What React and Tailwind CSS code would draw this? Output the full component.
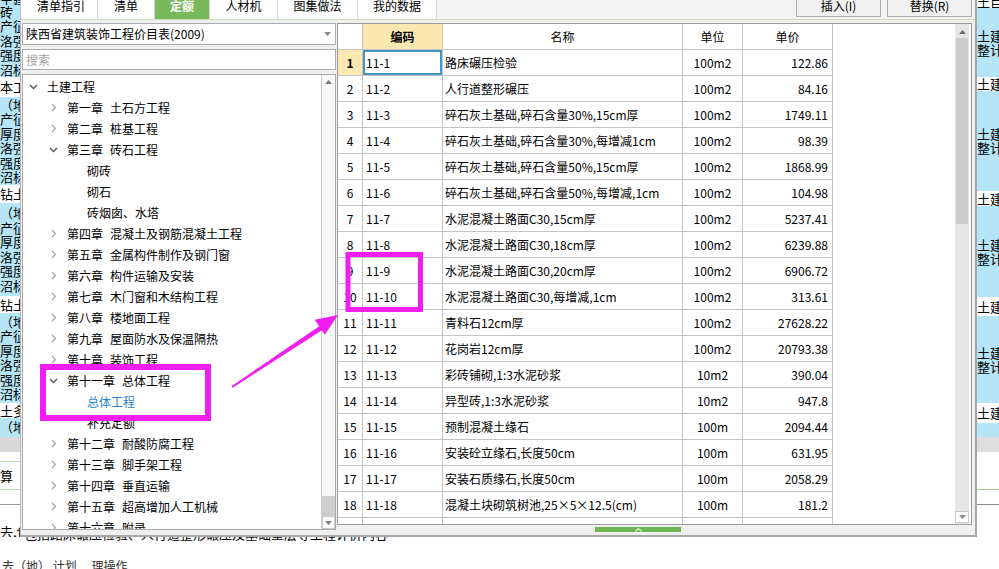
import React from 'react'

const TABS = [
  { label: '清单指引', w: 'w-[73px]' },
  { label: '清单', w: 'w-[57px]' },
  { label: '定额', w: 'w-[55px]', active: true },
  { label: '人材机', w: 'w-[68px]' },
  { label: '图集做法', w: 'w-[80px]' },
  { label: '我的数据', w: 'w-[79px]' },
]

const TREE = [
  { level: 0, label: '土建工程', open: true },
  { level: 1, label: '第一章 土石方工程' },
  { level: 1, label: '第二章 桩基工程' },
  { level: 1, label: '第三章 砖石工程', open: true },
  { level: 2, label: '砌砖' },
  { level: 2, label: '砌石' },
  { level: 2, label: '砖烟囱、水塔' },
  { level: 1, label: '第四章 混凝土及钢筋混凝土工程' },
  { level: 1, label: '第五章 金属构件制作及钢门窗' },
  { level: 1, label: '第六章 构件运输及安装' },
  { level: 1, label: '第七章 木门窗和木结构工程' },
  { level: 1, label: '第八章 楼地面工程' },
  { level: 1, label: '第九章 屋面防水及保温隔热' },
  { level: 1, label: '第十章 装饰工程' },
  { level: 1, label: '第十一章 总体工程', open: true },
  { level: 2, label: '总体工程', active: true },
  { level: 2, label: '补充定额' },
  { level: 1, label: '第十二章 耐酸防腐工程' },
  { level: 1, label: '第十三章 脚手架工程' },
  { level: 1, label: '第十四章 垂直运输' },
  { level: 1, label: '第十五章 超高增加人工机械' },
  { level: 1, label: '第十六章 附录' },
]

const INDENT = { 0: 'pl-[6px]', 1: 'pl-[26px]', 2: 'pl-[64px]' }

const ROWS = [
  ['11-1', '路床碾压检验', '100m2', '122.86'],
  ['11-2', '人行道整形碾压', '100m2', '84.16'],
  ['11-3', '碎石灰土基础,碎石含量30%,15cm厚', '100m2', '1749.11'],
  ['11-4', '碎石灰土基础,碎石含量30%,每增减1cm', '100m2', '98.39'],
  ['11-5', '碎石灰土基础,碎石含量50%,15cm厚', '100m2', '1868.99'],
  ['11-6', '碎石灰土基础,碎石含量50%,每增减,1cm', '100m2', '104.98'],
  ['11-7', '水泥混凝土路面C30,15cm厚', '100m2', '5237.41'],
  ['11-8', '水泥混凝土路面C30,18cm厚', '100m2', '6239.88'],
  ['11-9', '水泥混凝土路面C30,20cm厚', '100m2', '6906.72'],
  ['11-10', '水泥混凝土路面C30,每增减,1cm', '100m2', '313.61'],
  ['11-11', '青料石12cm厚', '100m2', '27628.22'],
  ['11-12', '花岗岩12cm厚', '100m2', '20793.38'],
  ['11-13', '彩砖铺砌,1:3水泥砂浆', '10m2', '390.04'],
  ['11-14', '异型砖,1:3水泥砂浆', '10m2', '947.8'],
  ['11-15', '预制混凝土缘石', '100m', '2094.44'],
  ['11-16', '安装砼立缘石,长度50cm', '100m', '631.95'],
  ['11-17', '安装石质缘石,长度50cm', '100m', '2058.29'],
  ['11-18', '混凝土块砌筑树池,25×5×12.5(cm)', '100m', '181.2'],
  ['', '', '', ''],
]

const SIX = ['（地', '产征', '厚度', '洛强', '强度', '沼标']

function Lines({ lines }) {
  return lines.map((t, i) => (
    <div key={i} className="whitespace-nowrap leading-[14.5px]">{t}</div>
  ))
}

function LeftStrip() {
  return (
    <div className="w-[20px] shrink-0 overflow-hidden text-[13px] text-black">
      <div className="h-[5px] overflow-hidden bg-[#b5e5f6]"><div className="-mt-[9px] whitespace-nowrap">土建</div></div>
      <div className="flex h-[72px] flex-col justify-center bg-[#b5e5f6]"><Lines lines={['砖（地', '产征', '洛强', '强度', '沼标']} /></div>
      <div className="flex h-[20px] items-center whitespace-nowrap">本工程</div>
      <div className="flex h-[88px] flex-col justify-center bg-[#b5e5f6]"><Lines lines={SIX} /></div>
      <div className="flex h-[18px] items-center whitespace-nowrap">钻土</div>
      <div className="flex h-[93px] flex-col justify-center bg-[#b5e5f6]"><Lines lines={SIX} /></div>
      <div className="flex h-[17px] items-center whitespace-nowrap">钻土</div>
      <div className="flex h-[90px] flex-col justify-center bg-[#b5e5f6]"><Lines lines={SIX} /></div>
      <div className="flex h-[15px] items-center whitespace-nowrap">土多</div>
      <div className="h-[19px] overflow-hidden bg-[#b5e5f6] pt-[2px]"><Lines lines={['（地']} /></div>
      <div className="h-[15px] bg-[#d9d9d9]" />
      <div className="h-[10px] border-b border-[#b9dcae]" />
      <div className="flex h-[28px] items-center border-b border-[#b9dcae] whitespace-nowrap">算</div>
      <div className="h-[15px] border-b border-[#9a9a9a]" />
      <div className="h-[20px]" />
      <div className="h-[12px] overflow-hidden whitespace-nowrap leading-[14px]">去,包</div>
    </div>
  )
}

function RightBlock({ h, two }) {
  return (
    <div className={`flex flex-col justify-center bg-[#b5e5f6] leading-[14px] ${h}`}>
      <div className="whitespace-nowrap">土建</div>
      {two && <div className="whitespace-nowrap">整计</div>}
    </div>
  )
}

function RightStrip() {
  return (
    <div className="w-[22px] shrink-0 overflow-hidden text-[13px] text-black">
      <div className="h-[8px] overflow-hidden"><div className="-mt-[8px] whitespace-nowrap">土目</div></div>
      <RightBlock h="h-[69px]" two />
      <div className="flex h-[14px] items-center whitespace-nowrap">土建</div>
      <RightBlock h="h-[100px]" two />
      <div className="flex h-[15px] items-center whitespace-nowrap">土建</div>
      <RightBlock h="h-[91px]" two />
      <div className="flex h-[19px] items-center whitespace-nowrap">土建</div>
      <RightBlock h="h-[87px]" two />
      <div className="flex h-[20px] items-center whitespace-nowrap">土建</div>
      <div className="h-[14px] bg-[#b5e5f6]" />
      <div className="h-[15px] bg-[#dedede]" />
      <div className="h-[38px] border-b border-[#9ccf8d]" />
      <div className="h-[15px] border-b border-[#8a8a8a]" />
    </div>
  )
}

function Chevron({ open }) {
  return open ? (
    <svg width="9" height="6" viewBox="0 0 9 6">
      <path d="M1 1l3.5 3.5L8 1" fill="none" stroke="#555" strokeWidth="1.4" />
    </svg>
  ) : (
    <svg width="6" height="9" viewBox="0 0 6 9">
      <path d="M1 1l3.5 3.5L1 8" fill="none" stroke="#a6a6a6" strokeWidth="1.3" />
    </svg>
  )
}

function TreeRow({ item }) {
  const parts = item.label.split(' ')
  return (
    <div className={`flex h-[21px] items-center whitespace-nowrap ${INDENT[item.level]}`}>
      {item.level < 2 && (
        <span className="mr-[9px] flex w-[9px] justify-center">
          <Chevron open={item.open} />
        </span>
      )}
      <span className={`flex gap-[7px] ${item.active ? 'text-[#2b83d6]' : 'text-black'}`}>
        {parts.map((p) => <span key={p}>{p}</span>)}
      </span>
    </div>
  )
}

function Triangle({ up, color = '#707070' }) {
  return (
    <svg width="7" height="4" viewBox="0 0 7 4">
      <path d={up ? 'M0 4L3.5 0L7 4Z' : 'M0 0L3.5 4L7 0Z'} fill={color} />
    </svg>
  )
}

function LeftPanel() {
  return (
    <div className="flex w-[314px] shrink-0 flex-col gap-[4px]">
      <div className="flex h-[22px] items-center justify-between border border-[#abadb3] bg-white pl-[3px] pr-[4px]">
        <span className="whitespace-nowrap">陕西省建筑装饰工程价目表(2009)</span>
        <Triangle color="#8a8a8a" />
      </div>
      <div className="flex h-[21px] items-center border border-[#abadb3] bg-white pl-[3px] text-[#a3a3a3]">搜索</div>
      <div className="flex h-[456px] border border-[#a9a9a9] bg-white">
        <div className="flex-1 overflow-hidden pt-[1px]">
          {TREE.map((item) => <TreeRow key={item.label + item.level} item={item} />)}
        </div>
        <div className="flex w-[14px] flex-col border-l border-[#cfcfcf] bg-[#f7f7f7]">
          <div className="flex h-[13px] items-center justify-center"><Triangle up color="#7d7d7d" /></div>
          <div className="flex-1" />
          <div className="h-[20px] bg-[#cdcdcd]" />
          <div className="flex h-[13px] items-center justify-center border border-[#c8c8c8] bg-white"><Triangle color="#7d7d7d" /></div>
        </div>
      </div>
    </div>
  )
}

function Table() {
  const line = 'border-[#c4c4c4]'
  return (
    <div className="w-[617px] overflow-hidden">
      <div className={`flex h-[26px] w-[495px] border-b ${line}`}>
        <div className={`w-[25px] border-r ${line}`} />
        <div className={`flex w-[80px] items-center justify-center border-r bg-[#fde8b1] font-bold ${line}`}>编码</div>
        <div className={`flex w-[240px] items-center justify-center border-r ${line}`}>名称</div>
        <div className={`flex w-[60px] items-center justify-center border-r ${line}`}>单位</div>
        <div className={`flex w-[90px] items-center justify-center border-r ${line}`}>单价</div>
      </div>
      {ROWS.map((r, i) => (
        <div key={i} className={`flex h-[26px] w-[495px] border-b ${line}`}>
          <div className={`flex w-[25px] items-center justify-center border-r ${line} ${i === 0 ? 'bg-[#fde8b1] font-bold' : ''}`}>
            {i < 18 ? i + 1 : ''}
          </div>
          <div className={`flex w-[80px] items-center border-r pl-[3px] ${line} ${i === 0 ? 'shadow-[inset_0_0_0_2px_#4396c5]' : ''}`}>{r[0]}</div>
          <div className={`flex w-[240px] items-center whitespace-nowrap border-r pl-[2px] ${line}`}>{r[1]}</div>
          <div className={`flex w-[60px] items-center justify-center border-r ${line}`}>{r[2]}</div>
          <div className={`flex w-[90px] items-center justify-end border-r pr-[4px] ${line}`}>{r[3]}</div>
        </div>
      ))}
    </div>
  )
}

function RightPanel() {
  return (
    <div className="flex w-[635px] shrink-0 flex-col">
      <div className="flex h-[502px] border border-[#9c9c9c] bg-white">
        <Table />
        <div className="flex w-[14px] flex-col bg-[#e6e6e6] pt-[2px] pb-[1px]">
          <div className="flex h-[12px] items-center justify-center"><Triangle up color="#6f6f6f" /></div>
          <div className="mx-[1px] h-[186px] bg-[#cccccc]" />
          <div className="flex-1" />
          <div className="flex h-[12px] items-center justify-center border border-[#c9c9c9] bg-white"><Triangle color="#8a8a8a" /></div>
        </div>
        <div className="w-[2px]" />
      </div>
      <div className="h-[10px]">
        <div className="ml-[258px] mt-[2px] flex h-[5px] w-[86px] items-center justify-center bg-[#6fb552]">
          <svg width="9" height="4" viewBox="0 0 9 4">
            <path d="M1 3.5L4.5 0.7L8 3.5" fill="none" stroke="#d9f0cf" strokeWidth="1.2" />
          </svg>
        </div>
      </div>
    </div>
  )
}

function Dialog() {
  return (
    <div className="flex w-[957px] shrink-0 flex-col border-l border-r-2 border-b-2 border-l-[#b9b9b9] border-r-[#a6a6a6] border-b-[#a8a8a8] bg-[#efefef]">
      <div className="flex h-[20px] border-b border-[#c9dbc1] bg-[#f4f4f4]">
        <div className="flex bg-white pl-[4px]">
          {TABS.map((t) => (
            <div
              key={t.label}
              className={`flex h-[19px] items-start justify-center border-r border-[#d6d6d6] text-[12px] leading-[12px] ${t.w} ${
                t.active ? 'bg-[#78b959] font-bold text-white' : 'text-black'
              }`}
            >
              {t.label}
            </div>
          ))}
        </div>
        <div className="ml-auto flex gap-[6px] pr-[3px]">
          <div className="flex h-[17px] w-[85px] items-start justify-center border border-t-0 border-[#acacac] bg-[#f0f0f0] leading-[12px]">插入(I)</div>
          <div className="flex h-[17px] w-[85px] items-start justify-center border border-t-0 border-[#acacac] bg-[#f0f0f0] leading-[12px]">替换(R)</div>
        </div>
      </div>
      <div className="flex flex-1 gap-[1px] pl-[1px] pt-[3px]">
        <LeftPanel />
        <RightPanel />
      </div>
    </div>
  )
}

function Annotations() {
  return (
    <svg className="pointer-events-none absolute left-0 top-0" width="999" height="569" viewBox="0 0 999 569">
      <rect x="43" y="367" width="165" height="51" fill="none" stroke="#f01ef0" strokeWidth="6" />
      <rect x="348" y="254.5" width="72.5" height="55" fill="none" stroke="#f01ef0" strokeWidth="5" />
      <polygon points="231.4,386.2 319.6,325.9 322.4,330.1 232.6,387.8" fill="#f01ef0" />
      <polygon points="338,315 324.8,334.8 314.8,319.8" fill="#f01ef0" />
    </svg>
  )
}

export default function App() {
  return (
    <div className="relative h-[569px] w-[999px] overflow-hidden bg-white font-['Noto_Sans_CJK_SC',sans-serif] text-[12px] text-black">
      <div className="flex h-[537px]">
        <LeftStrip />
        <Dialog />
        <RightStrip />
      </div>
      <div className="h-[4px] overflow-hidden pl-[24px] text-[13px] leading-[13px]">
        <div className="-mt-[10px] whitespace-nowrap">包括路床碾压检验、人行道整形碾压及基础垫层等工程计价内容</div>
      </div>
      <div className="mt-[18px] whitespace-nowrap pl-[2px] text-[12px] leading-[14px] text-[#333]">去（地） 计划　 理操作</div>
      <Annotations />
    </div>
  )
}
